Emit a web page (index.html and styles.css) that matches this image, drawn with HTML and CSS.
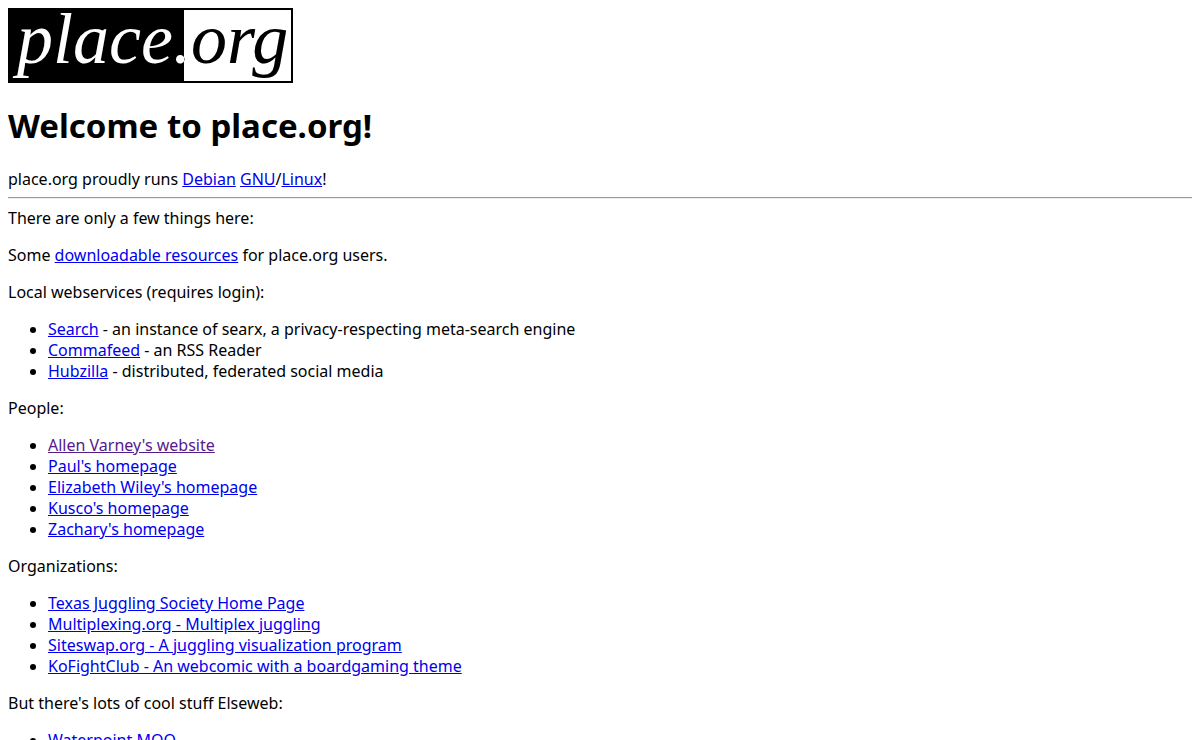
FILE: index.html
```html
<!DOCTYPE html>
<html lang="en">
<head>
<meta charset="utf-8">
<title>place.org</title>
<link rel="stylesheet" href="styles.css">
</head>
<body>
<svg class="logo" width="285" height="75" viewBox="0 0 285 75" role="img" aria-label="place.org">
  <rect width="285" height="75" fill="#000"/>
  <rect x="176" y="2" width="107" height="71" fill="#fff"/>
  <text class="logo-text" x="9" y="55">place.org</text>
</svg>
<h1>Welcome to place.org!</h1>
<p class="intro">place.org proudly runs <a href="#debian">Debian</a> <a href="#gnu">GNU</a>/<a href="#linux">Linux</a>!</p>
<hr>
<p class="lead">There are only a few things here:</p>
<p>Some <a href="#resources">downloadable resources</a> for place.org users.</p>
<p>Local webservices (requires login):</p>
<ul>
  <li><a href="#search">Search</a> - an instance of searx, a privacy-respecting meta-search engine</li>
  <li><a href="#commafeed">Commafeed</a> - an RSS Reader</li>
  <li><a href="#hubzilla">Hubzilla</a> - distributed, federated social media</li>
</ul>
<p>People:</p>
<ul>
  <li><a class="seen" href="#allen">Allen Varney's website</a></li>
  <li><a href="#paul">Paul's homepage</a></li>
  <li><a href="#elizabeth">Elizabeth Wiley's homepage</a></li>
  <li><a href="#kusco">Kusco's homepage</a></li>
  <li><a href="#zachary">Zachary's homepage</a></li>
</ul>
<p>Organizations:</p>
<ul>
  <li><a href="#texas">Texas Juggling Society Home Page</a></li>
  <li><a href="#multiplexing">Multiplexing.org - Multiplex juggling</a></li>
  <li><a href="#siteswap">Siteswap.org - A juggling visualization program</a></li>
  <li><a href="#kofightclub">KoFightClub - An webcomic with a boardgaming theme</a></li>
</ul>
<p>But there's lots of cool stuff Elseweb:</p>
<ul>
  <li><a href="#waterpoint">Waterpoint MOO</a></li>
</ul>
</body>
</html>
```
FILE: styles.css
```css
body {
  margin: 8px;
  background: #fff;
  color: #000;
  font: 16px/21px "Noto Sans", sans-serif;
}

.logo {
  display: block;
  isolation: isolate;
}

.logo-text {
  fill: #fff;
  font: italic 72px "Liberation Serif", serif;
  mix-blend-mode: difference;
}

h1 {
  margin: 22px 0;
  font-size: 33px;
  line-height: 42px;
}

p,
ul {
  margin: 16px 0;
}

ul {
  padding-left: 40px;
}

.intro {
  margin: 0;
}

hr {
  margin: 7px 0 9px;
  border: 0;
  border-top: 1px solid #9a9a9a;
  border-bottom: 1px solid #eee;
}

.lead {
  margin-top: 0;
}

a {
  color: #0000ee;
}

.seen {
  color: #551a8b;
}
```
